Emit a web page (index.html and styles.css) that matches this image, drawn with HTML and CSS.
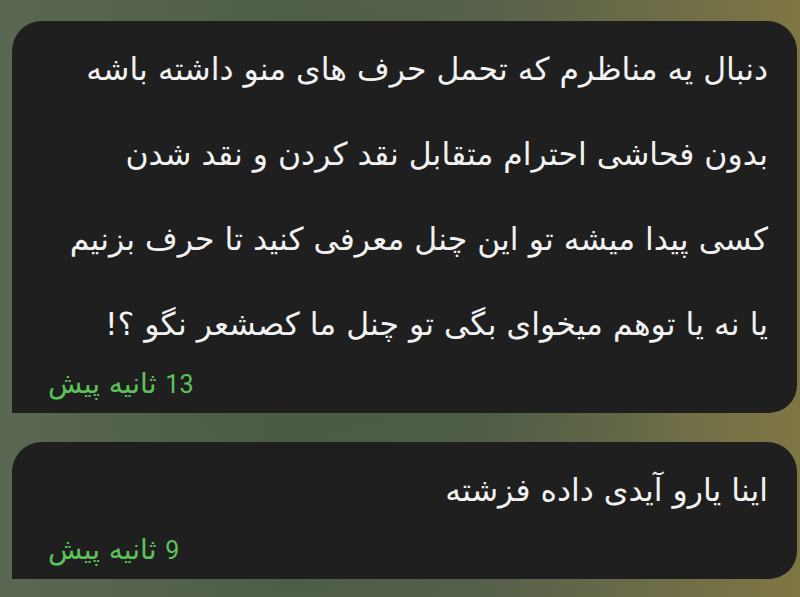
FILE: index.html
```html
<!DOCTYPE html>
<html lang="fa">
<head>
<meta charset="utf-8">
<link rel="stylesheet" href="styles.css">
</head>
<body>
<div class="chat">
  <div class="bubble">
    <div class="msg" dir="rtl">دنبال یه مناظرم که تحمل حرف های منو داشته باشه<br>بدون فحاشی احترام متقابل نقد کردن و نقد شدن<br>کسی پیدا میشه تو این چنل معرفی کنید تا حرف بزنیم<br>یا نه یا توهم میخوای بگی تو چنل ما کصشعر نگو ؟!</div>
    <div class="time" dir="rtl"><span class="num">13</span> <span class="ago">ثانیه پیش</span></div>
  </div>
  <div class="bubble">
    <div class="msg" dir="rtl">اینا یارو آیدی داده فزشته</div>
    <div class="time" dir="rtl"><span class="num">9</span> <span class="ago">ثانیه پیش</span></div>
  </div>
</div>
</body>
</html>
```
FILE: styles.css
```css
html, body {
  margin: 0;
  padding: 0;
  width: 800px;
  height: 597px;
  overflow: hidden;
}
body {
  background:
    radial-gradient(ellipse 60% 80% at 45% 55%, rgba(72, 90, 66, 0.9), rgba(72, 90, 66, 0) 70%),
    linear-gradient(90deg, #5a6752 0%, #4f5e48 35%, #56604a 60%, #7f7645 100%);
}
.chat {
  display: flex;
  flex-direction: column;
  gap: 29px;
  padding: 21px 3px 0 12px;
}
.bubble {
  background: #1f1f1f;
  border-radius: 30px 30px 28px 0;
  padding: 6px 29px 14px 36px;
}
.msg {
  font-family: "DejaVu Sans", sans-serif;
  font-size: 31.5px;
  line-height: 85px;
  color: #f2f2f2;
  text-align: right;
}
.time {
  font-family: "DejaVu Sans", sans-serif;
  font-size: 28px;
  line-height: 30px;
  height: 30px;
  color: #5ec25b;
  text-align: left;
  margin-top: 2px;
}
.num {
  font-family: Roboto, sans-serif;
  font-size: 25px;
}
.ago {
  font-size: 28px;
}
```
